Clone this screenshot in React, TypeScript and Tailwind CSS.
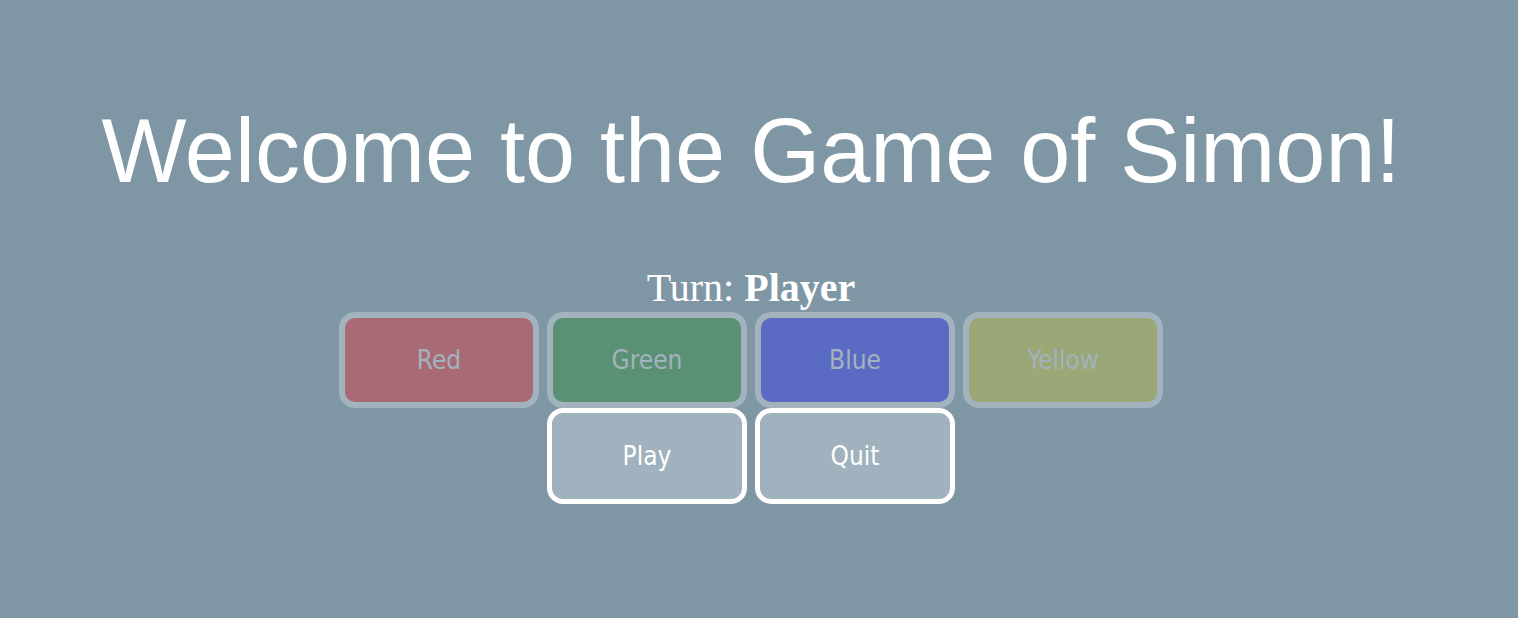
const colorButtons = [
  { label: "Red", bg: "bg-[#a86b75]" },
  { label: "Green", bg: "bg-[#5a9073]" },
  { label: "Blue", bg: "bg-[#5b6bc3]" },
  { label: "Yellow", bg: "bg-[#9ba777]" },
];

export default function App() {
  return (
    <div className="min-h-[618px] w-full bg-[#7f97a5]">
      <div className="flex w-[1502px] flex-col items-center">
        <h1 className="mt-[106px] font-['Liberation_Sans',Arial,sans-serif] text-[90px] leading-[90px] text-white">
          Welcome to the Game of Simon!
        </h1>

        <p className="mt-[72px] font-['Liberation_Serif','Times_New_Roman',serif] text-[40px] leading-[40px] text-white">
          Turn: <span className="font-bold">Player</span>
        </p>

        <div className="mt-[4px] grid grid-cols-[repeat(4,200px)] gap-x-2">
          {colorButtons.map((b) => (
            <button
              key={b.label}
              className={`h-[96px] rounded-[16px] border-[6px] border-[#a2b3be] ${b.bg} font-['DejaVu_Sans_Condensed','DejaVu_Sans',sans-serif] text-[26px] text-[#a2b3be]`}
            >
              {b.label}
            </button>
          ))}
          <button className="col-start-2 h-[96px] rounded-[16px] border-[5px] border-white bg-[#a0b2bd] font-['DejaVu_Sans_Condensed','DejaVu_Sans',sans-serif] text-[26px] text-white">
            Play
          </button>
          <button className="h-[96px] rounded-[16px] border-[5px] border-white bg-[#a0b2bd] font-['DejaVu_Sans_Condensed','DejaVu_Sans',sans-serif] text-[26px] text-white">
            Quit
          </button>
        </div>
      </div>
    </div>
  );
}
